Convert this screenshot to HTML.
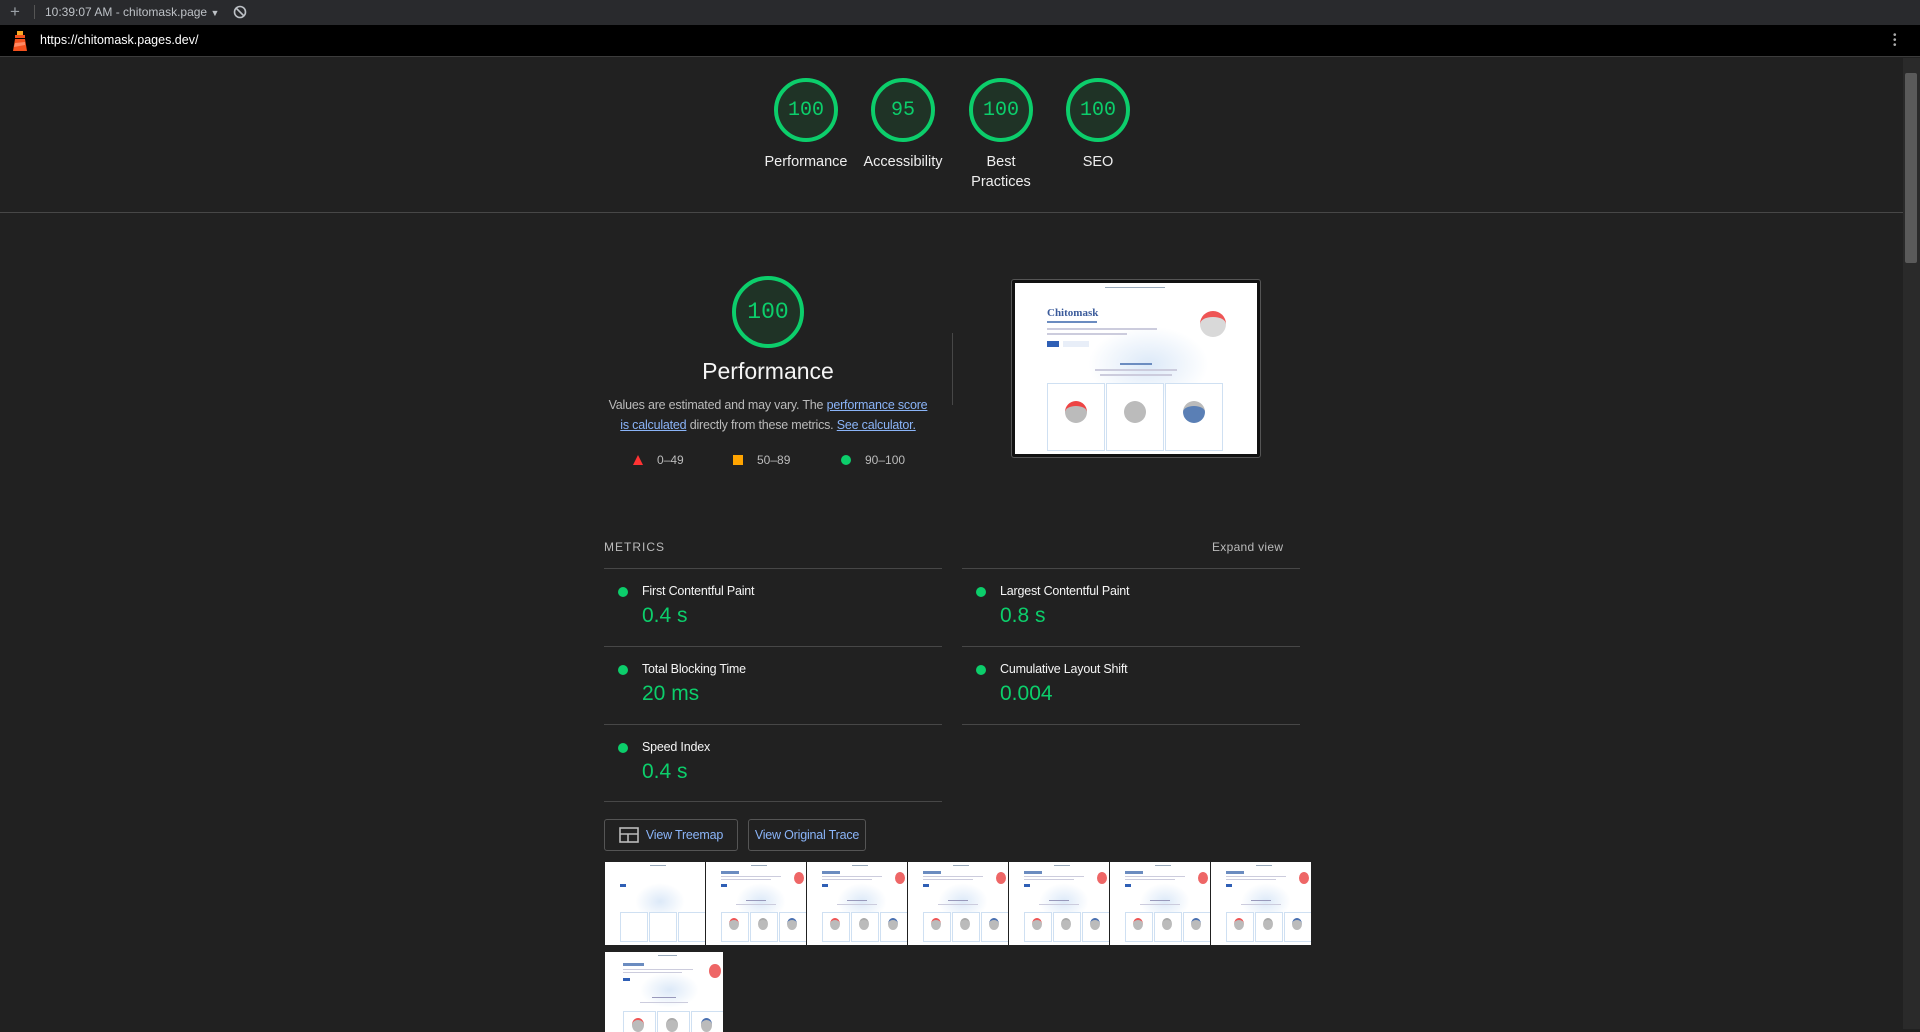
<!DOCTYPE html>
<html><head><meta charset="utf-8"><style>
*{box-sizing:border-box;margin:0;padding:0}
body{width:1920px;height:1029px;overflow:hidden;background:#212121;font-family:"Liberation Sans",Arial,sans-serif;color:#f5f5f5;position:relative}
.a{position:absolute}
.tab{left:0;top:0;width:1920px;height:25px;background:#292a2d;color:#bdc1c6;font-size:12px}
.url{left:0;top:25px;width:1920px;height:32px;background:#000;border-bottom:1px solid #3c3c3c}
.g{position:absolute;width:64px;height:64px;border-radius:50%;border:4px solid #0cce6b;background:#1f3326;color:#0cce6b;font-family:"Liberation Mono",monospace;font-size:20px;display:flex;align-items:center;justify-content:center}
.lbl{position:absolute;width:100px;text-align:center;font-size:14.5px;line-height:20px;color:#eee}
.line{position:absolute;height:1px;background:#474747}
.dot{position:absolute;width:10px;height:10px;border-radius:50%;background:#0cce6b}
.mt{position:absolute;font-size:12.5px;color:#f5f5f5;letter-spacing:-.2px}
.mv{position:absolute;font-size:21px;color:#0cce6b}
.btn{position:absolute;height:32px;border:1px solid #555;border-radius:3px;color:#8ab4f8;font-size:12.5px;display:flex;align-items:center;justify-content:center;letter-spacing:-.2px}
a{color:#8ab4f8;text-decoration:underline}
.th{position:absolute;background:#fff;overflow:hidden}
.th .bg{position:absolute;left:30%;top:25%;width:50%;height:45%;border-radius:50%;background:radial-gradient(#dce9f8,#fff 70%)}
.th .t{position:absolute;background:#6b8cc0;height:3px}
.th .c{position:absolute;border:1px solid #cfe0f2;background:#fff}
.th .f{position:absolute;border-radius:50%}
</style></head><body>
<div class="a tab">
 <div class="a" style="left:10px;top:2px;font-size:17px;color:#9aa0a6">+</div>
 <div class="a" style="left:34px;top:5px;width:1px;height:14px;background:#555"></div>
 <div class="a" style="left:45px;top:5px">10:39:07 AM - chitomask.page <span style="font-size:9px">▼</span></div>
 <svg class="a" style="left:233px;top:5px" width="14" height="14" viewBox="0 0 14 14"><circle cx="7" cy="7" r="5.5" fill="none" stroke="#bdc1c6" stroke-width="1.6"/><line x1="3" y1="3" x2="11" y2="11" stroke="#bdc1c6" stroke-width="1.6"/></svg>
</div>
<div class="a url">
 <svg class="a" style="left:11px;top:5px" width="18" height="22" viewBox="0 0 18 22"><rect x="6" y="1" width="6" height="4" fill="#f9a825"/><polygon points="4,5 14,5 14,8 4,8" fill="#f4511e"/><polygon points="4,9 14,9 16,21 2,21" fill="#f4511e"/><polygon points="4,13 14,12 14,15 3,17" fill="#ff8a65"/></svg>
 <div class="a" style="left:40px;top:8px;font-size:12.5px;color:#fff">https://chitomask.pages.dev/</div>
 <div class="a" style="left:1893px;top:8px;width:3px;color:#aaa;font-size:10px;line-height:5px">•<br>•<br>•</div>
</div>
<div class="a" style="left:1903px;top:58px;width:17px;height:971px;background:#2a2a2a"></div>
<div class="a" style="left:1905px;top:73px;width:12px;height:190px;background:#5a5a5a;border-radius:2px"></div>

<div class="g" style="left:774px;top:78px">100</div>
<div class="g" style="left:871px;top:78px">95</div>
<div class="g" style="left:969px;top:78px">100</div>
<div class="g" style="left:1066px;top:78px">100</div>
<div class="lbl" style="left:756px;top:152px">Performance</div>
<div class="lbl" style="left:853px;top:152px">Accessibility</div>
<div class="lbl" style="left:951px;top:152px">Best<br>Practices</div>
<div class="lbl" style="left:1048px;top:152px">SEO</div>
<div class="line" style="left:0;top:212px;width:1903px"></div>

<div class="g" style="left:732px;top:276px;width:72px;height:72px;font-size:23px">100</div>
<div class="a" style="left:628px;top:358px;width:280px;text-align:center;font-size:23px">Performance</div>
<div class="a" style="left:598px;top:395px;width:340px;text-align:center;font-size:12.5px;line-height:20px;color:#bbb;letter-spacing:-.2px">Values are estimated and may vary. The <a>performance score</a><br><a>is calculated</a> directly from these metrics. <a>See calculator.</a></div>
<div class="a" style="left:633px;top:455px;width:0;height:0;border-left:5px solid transparent;border-right:5px solid transparent;border-bottom:10px solid #ff3333"></div>
<div class="a" style="left:657px;top:453px;font-size:12px;color:#bbb">0–49</div>
<div class="a" style="left:733px;top:455px;width:10px;height:10px;background:#ffa400"></div>
<div class="a" style="left:757px;top:453px;font-size:12px;color:#bbb">50–89</div>
<div class="a" style="left:841px;top:455px;width:10px;height:10px;border-radius:50%;background:#0cce6b"></div>
<div class="a" style="left:865px;top:453px;font-size:12px;color:#bbb">90–100</div>
<div class="a" style="left:952px;top:333px;width:1px;height:72px;background:#474747"></div>

<div class="a" style="left:1011px;top:279px;width:250px;height:179px;border:1px solid #555;border-radius:3px;background:#111"></div>
<div class="th" style="left:1015px;top:283px;width:242px;height:171px">
 <div class="bg"></div>
 <div class="t" style="left:90px;top:4px;width:60px;height:1px;background:#9ab"></div>
 <div class="a" style="left:32px;top:24px;font-family:'Liberation Serif',serif;font-size:11px;font-weight:bold;color:#3a5a9a">Chitomask</div>
 <div class="t" style="left:32px;top:38px;width:50px;height:2px"></div>
 <div class="t" style="left:32px;top:45px;width:110px;height:2px;background:#ccd"></div>
 <div class="t" style="left:32px;top:50px;width:80px;height:2px;background:#ccd"></div>
 <div class="t" style="left:32px;top:58px;width:12px;height:6px;background:#2f5fb5"></div>
 <div class="t" style="left:48px;top:58px;width:26px;height:6px;background:#e8eef8"></div>
 <div class="f" style="left:185px;top:28px;width:26px;height:26px;background:#d9d9d9;border-top:6px solid #e55"></div>
 <div class="t" style="left:105px;top:80px;width:32px;height:2px"></div>
 <div class="t" style="left:80px;top:86px;width:82px;height:2px;background:#ccd"></div>
 <div class="t" style="left:85px;top:91px;width:72px;height:2px;background:#ccd"></div>
 <div class="c" style="left:32px;top:100px;width:58px;height:68px"></div>
 <div class="c" style="left:91px;top:100px;width:58px;height:68px"></div>
 <div class="c" style="left:150px;top:100px;width:58px;height:68px"></div>
 <div class="f" style="left:50px;top:118px;width:22px;height:22px;background:#bbb;border-top:5px solid #e44"></div>
 <div class="f" style="left:109px;top:118px;width:22px;height:22px;background:#bbb"></div>
 <div class="f" style="left:168px;top:118px;width:22px;height:22px;background:#5a7fb5;border-top:5px solid #bbb"></div>
</div>

<div class="a" style="left:604px;top:540px;font-size:12px;letter-spacing:1px;color:#bbb">METRICS</div>
<div class="a" style="left:1212px;top:540px;font-size:12px;color:#bbb;letter-spacing:.3px">Expand view</div>
<div class="line" style="left:604px;top:568px;width:338px"></div>
<div class="line" style="left:962px;top:568px;width:338px"></div>
<div class="line" style="left:604px;top:646px;width:338px"></div>
<div class="line" style="left:962px;top:646px;width:338px"></div>
<div class="line" style="left:604px;top:724px;width:338px"></div>
<div class="line" style="left:962px;top:724px;width:338px"></div>
<div class="line" style="left:604px;top:801px;width:338px"></div>

<div class="dot" style="left:618px;top:587px"></div><div class="mt" style="left:642px;top:584px">First Contentful Paint</div><div class="mv" style="left:642px;top:604px">0.4 s</div>
<div class="dot" style="left:976px;top:587px"></div><div class="mt" style="left:1000px;top:584px">Largest Contentful Paint</div><div class="mv" style="left:1000px;top:604px">0.8 s</div>
<div class="dot" style="left:618px;top:665px"></div><div class="mt" style="left:642px;top:662px">Total Blocking Time</div><div class="mv" style="left:642px;top:682px">20 ms</div>
<div class="dot" style="left:976px;top:665px"></div><div class="mt" style="left:1000px;top:662px">Cumulative Layout Shift</div><div class="mv" style="left:1000px;top:682px">0.004</div>
<div class="dot" style="left:618px;top:743px"></div><div class="mt" style="left:642px;top:740px">Speed Index</div><div class="mv" style="left:642px;top:760px">0.4 s</div>

<div class="btn" style="left:604px;top:819px;width:134px">
 <svg width="20" height="16" viewBox="0 0 20 16" style="margin-right:7px"><rect x="1" y="1" width="18" height="14" fill="none" stroke="#bbb" stroke-width="1.6"/><line x1="1" y1="7" x2="19" y2="7" stroke="#bbb" stroke-width="1.6"/><line x1="9" y1="7" x2="9" y2="15" stroke="#bbb" stroke-width="1.6"/></svg>View Treemap</div>
<div class="btn" style="left:748px;top:819px;width:118px">View Original Trace</div>

<div id="fs"></div>
<script>
var h='';
function thumb(x,y,w,hh,first){
 var s='<div class="th" style="left:'+x+'px;top:'+y+'px;width:'+w+'px;height:'+hh+'px"><div class="bg"></div>';
 var k=w/100;
 s+='<div class="t" style="left:'+45*k+'px;top:3px;width:'+16*k+'px;height:1px;background:#9ab"></div>';
 if(!first){
 s+='<div class="t" style="left:'+15*k+'px;top:'+9*k+'px;width:'+18*k+'px;height:3px"></div>';
 s+='<div class="t" style="left:'+15*k+'px;top:'+14*k+'px;width:'+60*k+'px;height:1px;background:#ccd"></div>';
 s+='<div class="t" style="left:'+15*k+'px;top:'+17*k+'px;width:'+50*k+'px;height:1px;background:#ccd"></div>';
 s+='<div class="f" style="left:'+88*k+'px;top:'+10*k+'px;width:'+10*k+'px;height:'+12*k+'px;background:#e66"></div>';
 s+='<div class="t" style="left:'+40*k+'px;top:'+38*k+'px;width:'+20*k+'px;height:1px;background:#99b"></div>';
 s+='<div class="t" style="left:'+30*k+'px;top:'+42*k+'px;width:'+40*k+'px;height:1px;background:#ccd"></div>';
 }
 s+='<div class="t" style="left:'+15*k+'px;top:'+22*k+'px;width:'+6*k+'px;height:'+3*k+'px;background:#2f5fb5"></div>';
 for(var i=0;i<3;i++){
  s+='<div class="c" style="left:'+(15+i*29)*k+'px;top:'+50*k+'px;width:'+28*k+'px;height:'+30*k+'px"></div>';
  if(!first){var col=['#e55','#aaa','#4a70b0'][i];
  s+='<div class="f" style="left:'+(23+i*29)*k+'px;top:'+56*k+'px;width:'+10*k+'px;height:'+12*k+'px;background:#bbb;border-top:2px solid '+col+'"></div>';}
 }
 return s+'</div>';
}
for(var i=0;i<7;i++) h+=thumb(605+i*101,862,100,83,i==0);
h+=thumb(605,952,118,80,false);
document.getElementById('fs').innerHTML=h;
</script>
</body></html>
